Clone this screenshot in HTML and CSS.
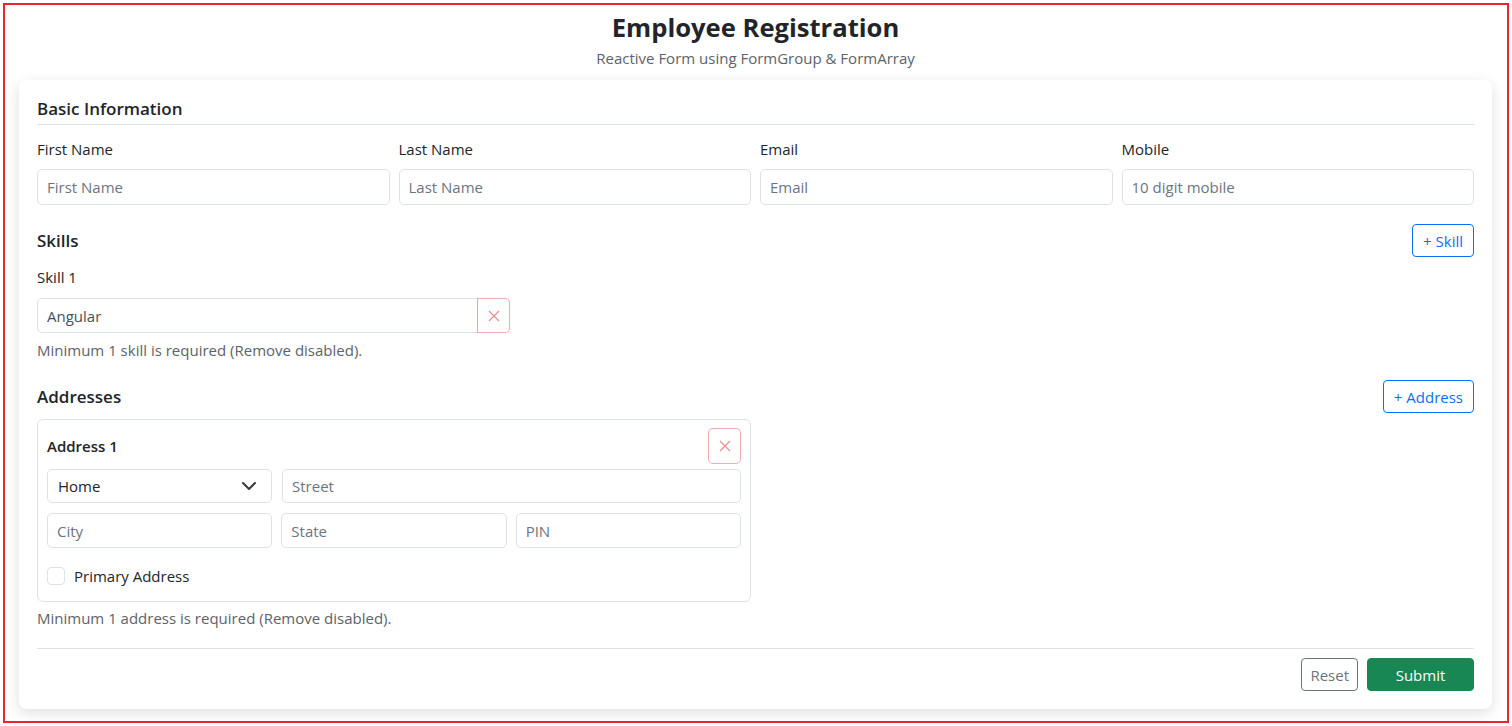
FILE: index.html
```html
<!DOCTYPE html>
<html lang="en">
<head>
<meta charset="utf-8">
<title>Employee Registration</title>
<link rel="stylesheet" href="styles.css">
</head>
<body>
<div class="frame">
  <header class="page-head">
    <h1 class="title">Employee Registration</h1>
    <p class="subtitle">Reactive Form using FormGroup &amp; FormArray</p>
  </header>

  <form class="card">
    <h2 class="section-title bordered">Basic Information</h2>
    <div class="grid4">
      <div class="field">
        <label class="label">First Name</label>
        <input class="input" placeholder="First Name">
      </div>
      <div class="field">
        <label class="label">Last Name</label>
        <input class="input" placeholder="Last Name">
      </div>
      <div class="field">
        <label class="label">Email</label>
        <input class="input" placeholder="Email">
      </div>
      <div class="field">
        <label class="label">Mobile</label>
        <input class="input" placeholder="10 digit mobile">
      </div>
    </div>

    <div class="section-row skills-row">
      <h2 class="section-title">Skills</h2>
      <button type="button" class="btn btn-outline-primary">+ Skill</button>
    </div>
    <label class="label skill-label">Skill 1</label>
    <div class="input-group">
      <input class="input grouped" value="Angular">
      <button type="button" class="btn-x grouped-btn" disabled>
        <svg width="14" height="14" viewBox="0 0 14 14"><path d="M2 2 L12 12 M12 2 L2 12" stroke="#dc3545" stroke-width="1.2" fill="none"/></svg>
      </button>
    </div>
    <p class="help">Minimum 1 skill is required (Remove disabled).</p>

    <div class="section-row addr-row">
      <h2 class="section-title">Addresses</h2>
      <button type="button" class="btn btn-outline-primary">+ Address</button>
    </div>
    <div class="addr-card">
      <div class="addr-head">
        <h3 class="addr-title">Address 1</h3>
        <button type="button" class="btn-x square" disabled>
          <svg width="14" height="14" viewBox="0 0 14 14"><path d="M2 2 L12 12 M12 2 L2 12" stroke="#dc3545" stroke-width="1.2" fill="none"/></svg>
        </button>
      </div>
      <div class="addr-row1">
        <div class="select">
          <span>Home</span>
          <svg width="16" height="16" viewBox="0 0 16 16"><path d="M2 5 L8 11 L14 5" stroke="#343a40" stroke-width="2" fill="none" stroke-linecap="round" stroke-linejoin="round"/></svg>
        </div>
        <input class="input sm" placeholder="Street">
      </div>
      <div class="addr-row2">
        <input class="input sm2" placeholder="City">
        <input class="input sm2" placeholder="State">
        <input class="input sm2" placeholder="PIN">
      </div>
      <label class="check">
        <span class="box"></span>
        <span>Primary Address</span>
      </label>
    </div>
    <p class="help addr-help">Minimum 1 address is required (Remove disabled).</p>

    <div class="actions">
      <button type="button" class="btn btn-outline-secondary">Reset</button>
      <button type="button" class="btn btn-success">Submit</button>
    </div>
  </form>
</div>
</body>
</html>
```

FILE: styles.css
```css
* { box-sizing: border-box; }
html, body { margin: 0; padding: 0; }
body {
  background: #fff;
  font-family: "Open Sans", "Noto Sans", Arial, sans-serif;
  color: #212529;
  padding: 3px;
}
.frame {
  height: 720px;
  border: 2px solid #e8262d;
  padding: 0 15px 0 14px;
  background: #fff;
}
.page-head {
  text-align: center;
  height: 75px;
  padding-top: 5px;
}
.title {
  margin: 0;
  font-size: 25.6px;
  font-weight: 700;
  line-height: 36px;
  color: #212529;
}
.subtitle {
  margin: 2px 0 0;
  font-size: 15px;
  line-height: 20px;
  color: #5c636a;
}
.card {
  display: block;
  background: #fff;
  border-radius: 8px;
  box-shadow: 0 4px 14px rgba(0,0,0,0.13);
  padding: 17px 18px 18px;
}
.section-title {
  margin: 0;
  font-size: 17px;
  font-weight: 600;
  line-height: 24px;
}
.bordered {
  border-bottom: 1px solid #dee2e6;
  padding-bottom: 3px;
}
.grid4 {
  display: grid;
  grid-template-columns: repeat(4, 1fr);
  gap: 9px;
  margin-top: 13px;
}
.field { display: flex; flex-direction: column; }
.label {
  font-size: 15px;
  line-height: 22px;
  color: #212529;
  margin-bottom: 9px;
}
.input {
  height: 36px;
  border: 1px solid #dee2e6;
  border-radius: 5px;
  padding: 0 9px;
  font: inherit;
  font-size: 15px;
  color: #495057;
  background: #fff;
  outline: none;
  width: 100%;
}
.input::placeholder { color: #6c757d; }
.section-row {
  display: flex;
  justify-content: space-between;
  align-items: center;
}
.skills-row { margin-top: 19px; }
.addr-row { margin-top: 19px; }
.btn {
  height: 33px;
  font: inherit;
  font-size: 15px;
  border-radius: 4px;
  padding: 0 10px;
  background: #fff;
  cursor: pointer;
}
.btn-outline-primary { border: 1px solid #0d6efd; color: #0d6efd; }
.btn-outline-secondary { border: 1px solid #6c757d; color: #6c757d; padding: 0 8px; }
.btn-success { border: 1px solid #198754; background: #198754; color: #fff; width: 107px; }
.skill-label { display: block; margin-top: 9px; margin-bottom: 10px; }
.input-group {
  display: flex;
  width: 473px;
}
.grouped {
  height: 35px;
  border-radius: 5px 0 0 5px;
  flex: 1;
}
.btn-x {
  background: #fff;
  border: 1px solid rgba(220,53,69,0.55);
  display: flex;
  align-items: center;
  justify-content: center;
  padding: 0;
  opacity: 0.75;
}
.btn-x svg { opacity: 0.75; }
.grouped-btn {
  width: 33px;
  height: 35px;
  border-radius: 0 5px 5px 0;
  margin-left: -1px;
}
.help {
  margin: 6px 0 0;
  font-size: 15px;
  line-height: 22px;
  color: #5c636a;
}
.addr-card {
  margin-top: 6px;
  width: 714px;
  border: 1px solid #dee2e6;
  border-radius: 6px;
  padding: 8px 9px 14px;
}
.addr-head {
  display: flex;
  justify-content: space-between;
  align-items: center;
}
.addr-title {
  margin: 0;
  font-size: 15px;
  font-weight: 600;
  line-height: 20px;
}
.square {
  width: 33px;
  height: 36px;
  border-radius: 5px;
}
.addr-row1 {
  display: grid;
  grid-template-columns: 225px 1fr;
  gap: 10px;
  margin-top: 5px;
}
.addr-row2 {
  display: grid;
  grid-template-columns: repeat(3, 1fr);
  gap: 9px;
  margin-top: 10px;
}
.sm { height: 34px; }
.sm2 { height: 35px; }
.select {
  height: 34px;
  border: 1px solid #dee2e6;
  border-radius: 5px;
  padding: 0 14px 0 10px;
  display: flex;
  align-items: center;
  justify-content: space-between;
  font-size: 15px;
  color: #212529;
}
.check {
  display: flex;
  align-items: center;
  gap: 9px;
  margin-top: 17px;
  font-size: 15px;
  line-height: 22px;
}
.box {
  width: 18px;
  height: 18px;
  border: 1px solid #dee2e6;
  border-radius: 4px;
  background: #fff;
}
.addr-help { margin-top: 5px; }
.actions {
  margin-top: 19px;
  border-top: 1px solid #dee2e6;
  padding-top: 9px;
  display: flex;
  justify-content: flex-end;
  gap: 9px;
}
```
